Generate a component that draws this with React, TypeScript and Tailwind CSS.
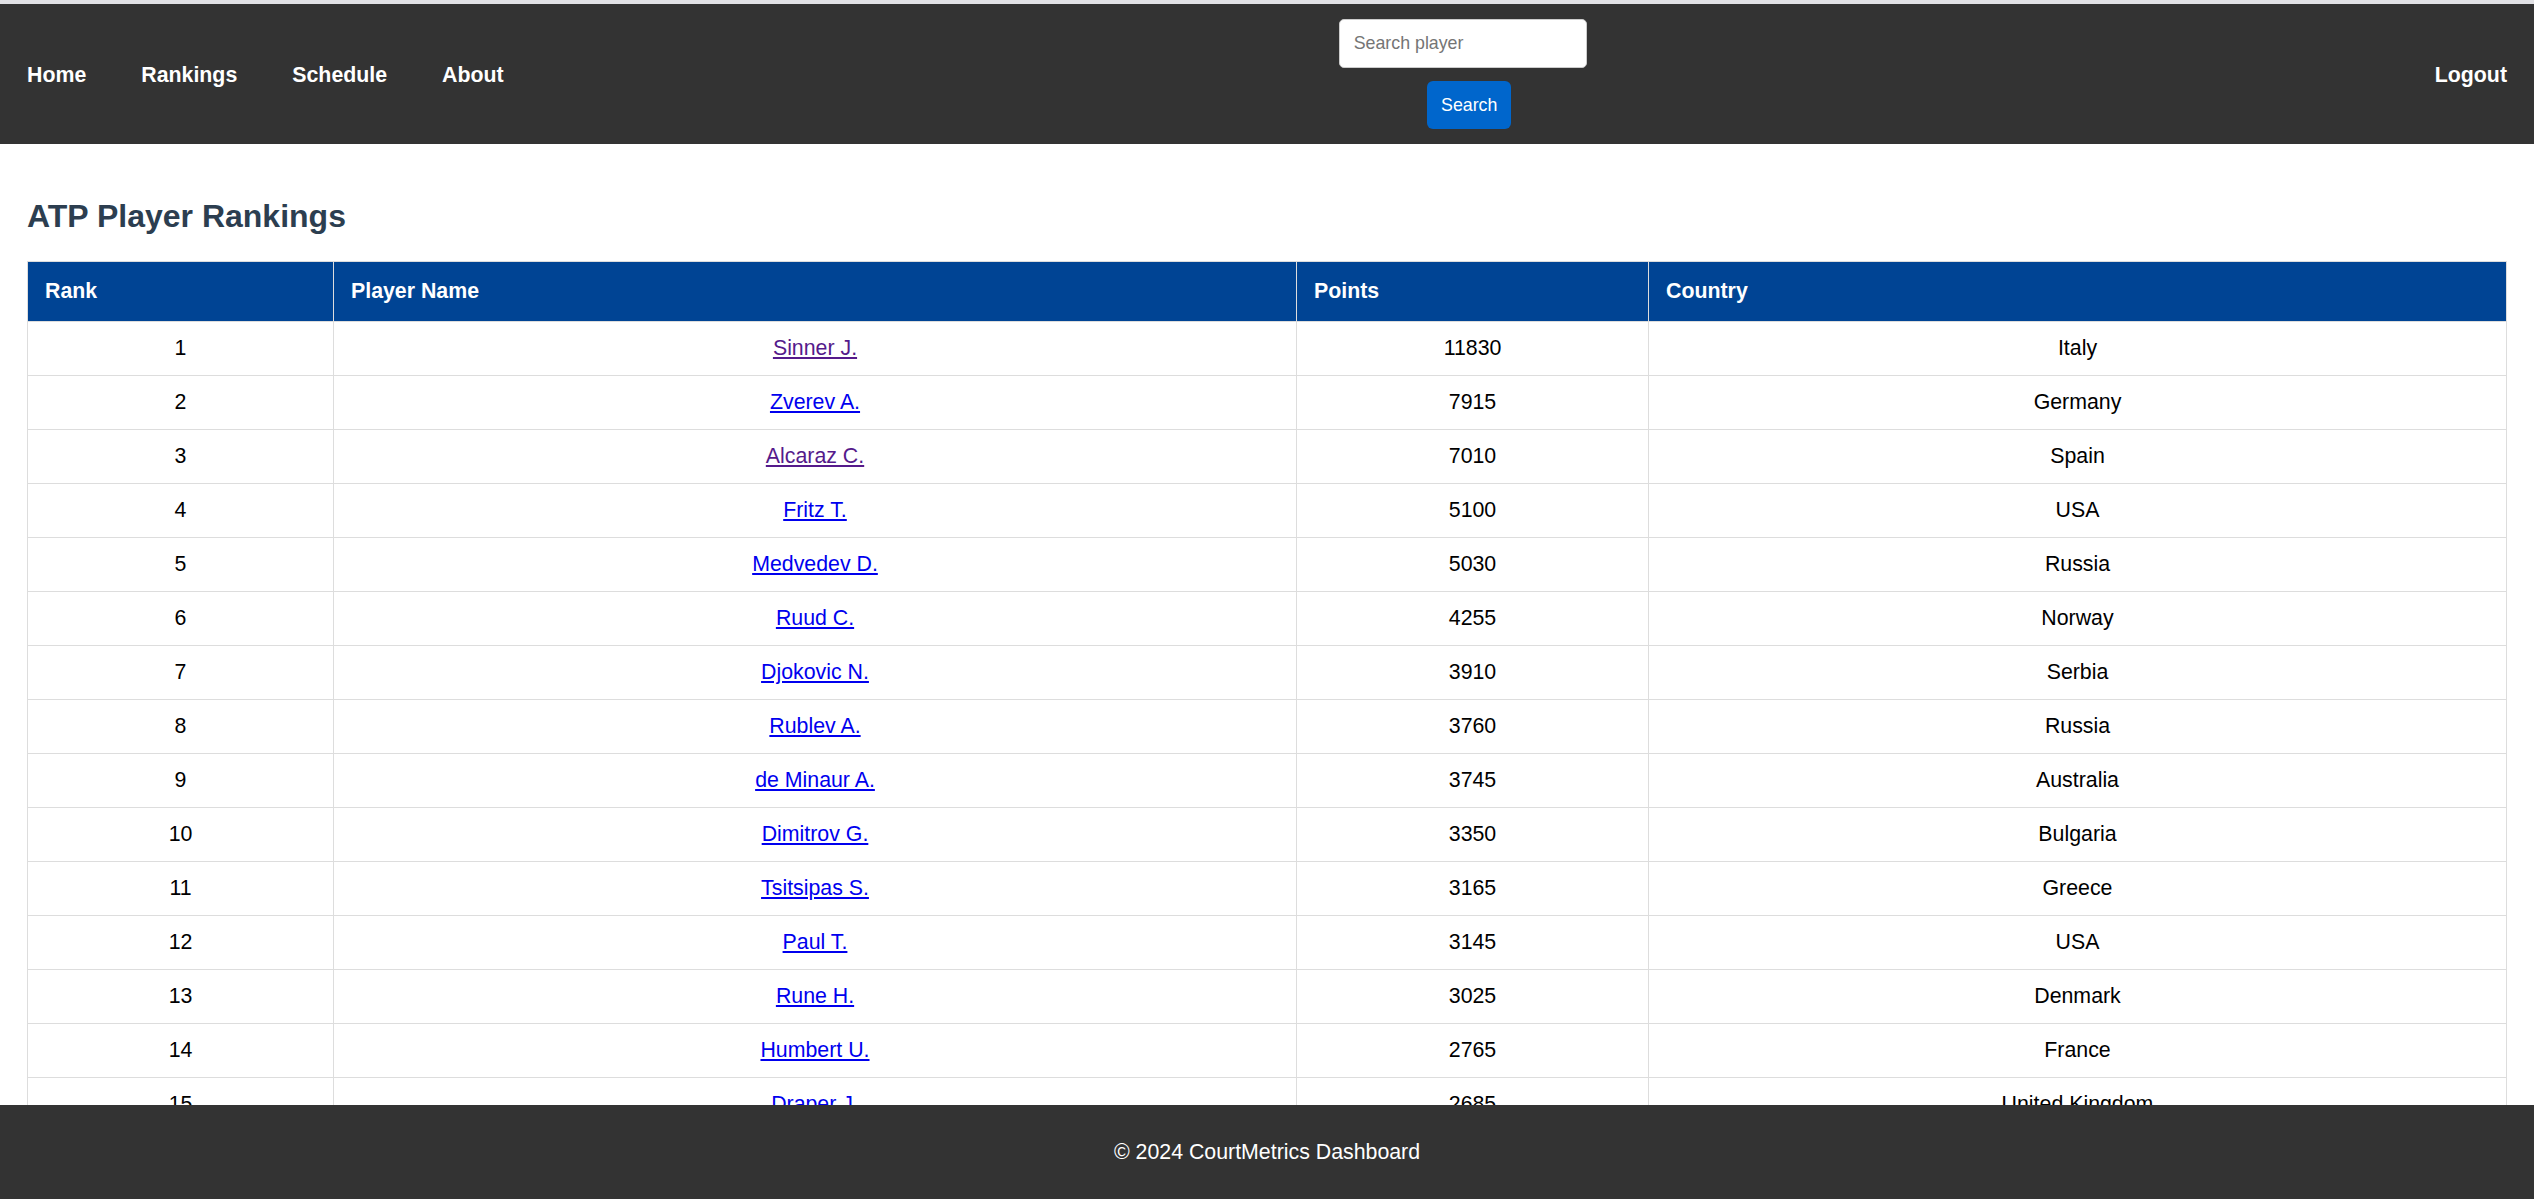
const players = [
  { rank: 1, name: 'Sinner J.', points: 11830, country: 'Italy', visited: true },
  { rank: 2, name: 'Zverev A.', points: 7915, country: 'Germany' },
  { rank: 3, name: 'Alcaraz C.', points: 7010, country: 'Spain', visited: true },
  { rank: 4, name: 'Fritz T.', points: 5100, country: 'USA' },
  { rank: 5, name: 'Medvedev D.', points: 5030, country: 'Russia' },
  { rank: 6, name: 'Ruud C.', points: 4255, country: 'Norway' },
  { rank: 7, name: 'Djokovic N.', points: 3910, country: 'Serbia' },
  { rank: 8, name: 'Rublev A.', points: 3760, country: 'Russia' },
  { rank: 9, name: 'de Minaur A.', points: 3745, country: 'Australia' },
  { rank: 10, name: 'Dimitrov G.', points: 3350, country: 'Bulgaria' },
  { rank: 11, name: 'Tsitsipas S.', points: 3165, country: 'Greece' },
  { rank: 12, name: 'Paul T.', points: 3145, country: 'USA' },
  { rank: 13, name: 'Rune H.', points: 3025, country: 'Denmark' },
  { rank: 14, name: 'Humbert U.', points: 2765, country: 'France' },
  { rank: 15, name: 'Draper J.', points: 2685, country: 'United Kingdom' },
  { rank: 16, name: 'Hurkacz H.', points: 2600, country: 'Poland' },
  { rank: 17, name: 'Musetti L.', points: 2600, country: 'Italy' },
  { rank: 18, name: 'Shelton B.', points: 2280, country: 'USA' },
];

const navLinks = ['Home', 'Rankings', 'Schedule', 'About'];

export default function App() {
  return (
    <div className="min-h-screen bg-white pb-[94px] font-['Liberation_Sans',Arial,sans-serif] text-[21.33px] text-black">
      {/* thin strip above the nav bar */}
      <div className="h-[4px] bg-[#e1e1e5]"></div>

      <header className="flex items-center justify-between bg-[#333333] px-[27px] py-[15px]">
        <nav className="flex items-center gap-[55px] pt-[3px]">
          {navLinks.map((link) => (
            <a key={link} href="#" className="font-bold text-white no-underline">
              {link}
            </a>
          ))}
        </nav>

        <form className="mr-[13px] flex flex-col items-center gap-[13px]" onSubmit={(e) => e.preventDefault()}>
          <input
            type="text"
            placeholder="Search player"
            className="h-[49px] w-[248px] rounded-[5px] border border-[#cccccc] bg-white px-[14px] text-[17.8px] text-black placeholder:text-[#757575] outline-none"
          />
          <button
            type="submit"
            className="ml-[13px] h-[48px] w-[84px] rounded-[6px] bg-[#0066cc] text-[17.8px] text-white"
          >
            Search
          </button>
        </form>

        <a href="#" className="pt-[3px] font-bold text-white no-underline">
          Logout
        </a>
      </header>

      <main className="p-[27px]">
        <h2 className="my-[26.5px] text-[32px] leading-[37px] font-bold text-[#2c3e50]">ATP Player Rankings</h2>

        <table className="w-full table-fixed border-collapse">
          <colgroup>
            <col className="w-[306px]" />
            <col className="w-[963px]" />
            <col className="w-[352px]" />
            <col />
          </colgroup>
          <thead>
            <tr className="h-[60px] bg-[#004494] text-white">
              <th className="border border-[#dddddd] px-[17px] text-left font-bold">Rank</th>
              <th className="border border-[#dddddd] px-[17px] text-left font-bold">Player Name</th>
              <th className="border border-[#dddddd] px-[17px] text-left font-bold">Points</th>
              <th className="border border-[#dddddd] px-[17px] text-left font-bold">Country</th>
            </tr>
          </thead>
          <tbody>
            {players.map((p) => (
              <tr key={p.rank} className="h-[54px]">
                <td className="border border-[#dddddd] px-[17px] text-center">{p.rank}</td>
                <td className="border border-[#dddddd] px-[17px] text-center">
                  <a href="#" className={p.visited ? 'text-[#551a8b] underline' : 'text-[#0000ee] underline'}>
                    {p.name}
                  </a>
                </td>
                <td className="border border-[#dddddd] px-[17px] text-center">{p.points}</td>
                <td className="border border-[#dddddd] px-[17px] text-center">{p.country}</td>
              </tr>
            ))}
          </tbody>
        </table>
      </main>

      {/* footer stays pinned to the bottom, over the table */}
      <footer className="fixed bottom-0 left-0 right-0 flex h-[94px] items-center justify-center bg-[#333333] pt-[2px] text-white">
        © 2024 CourtMetrics Dashboard
      </footer>
    </div>
  );
}
